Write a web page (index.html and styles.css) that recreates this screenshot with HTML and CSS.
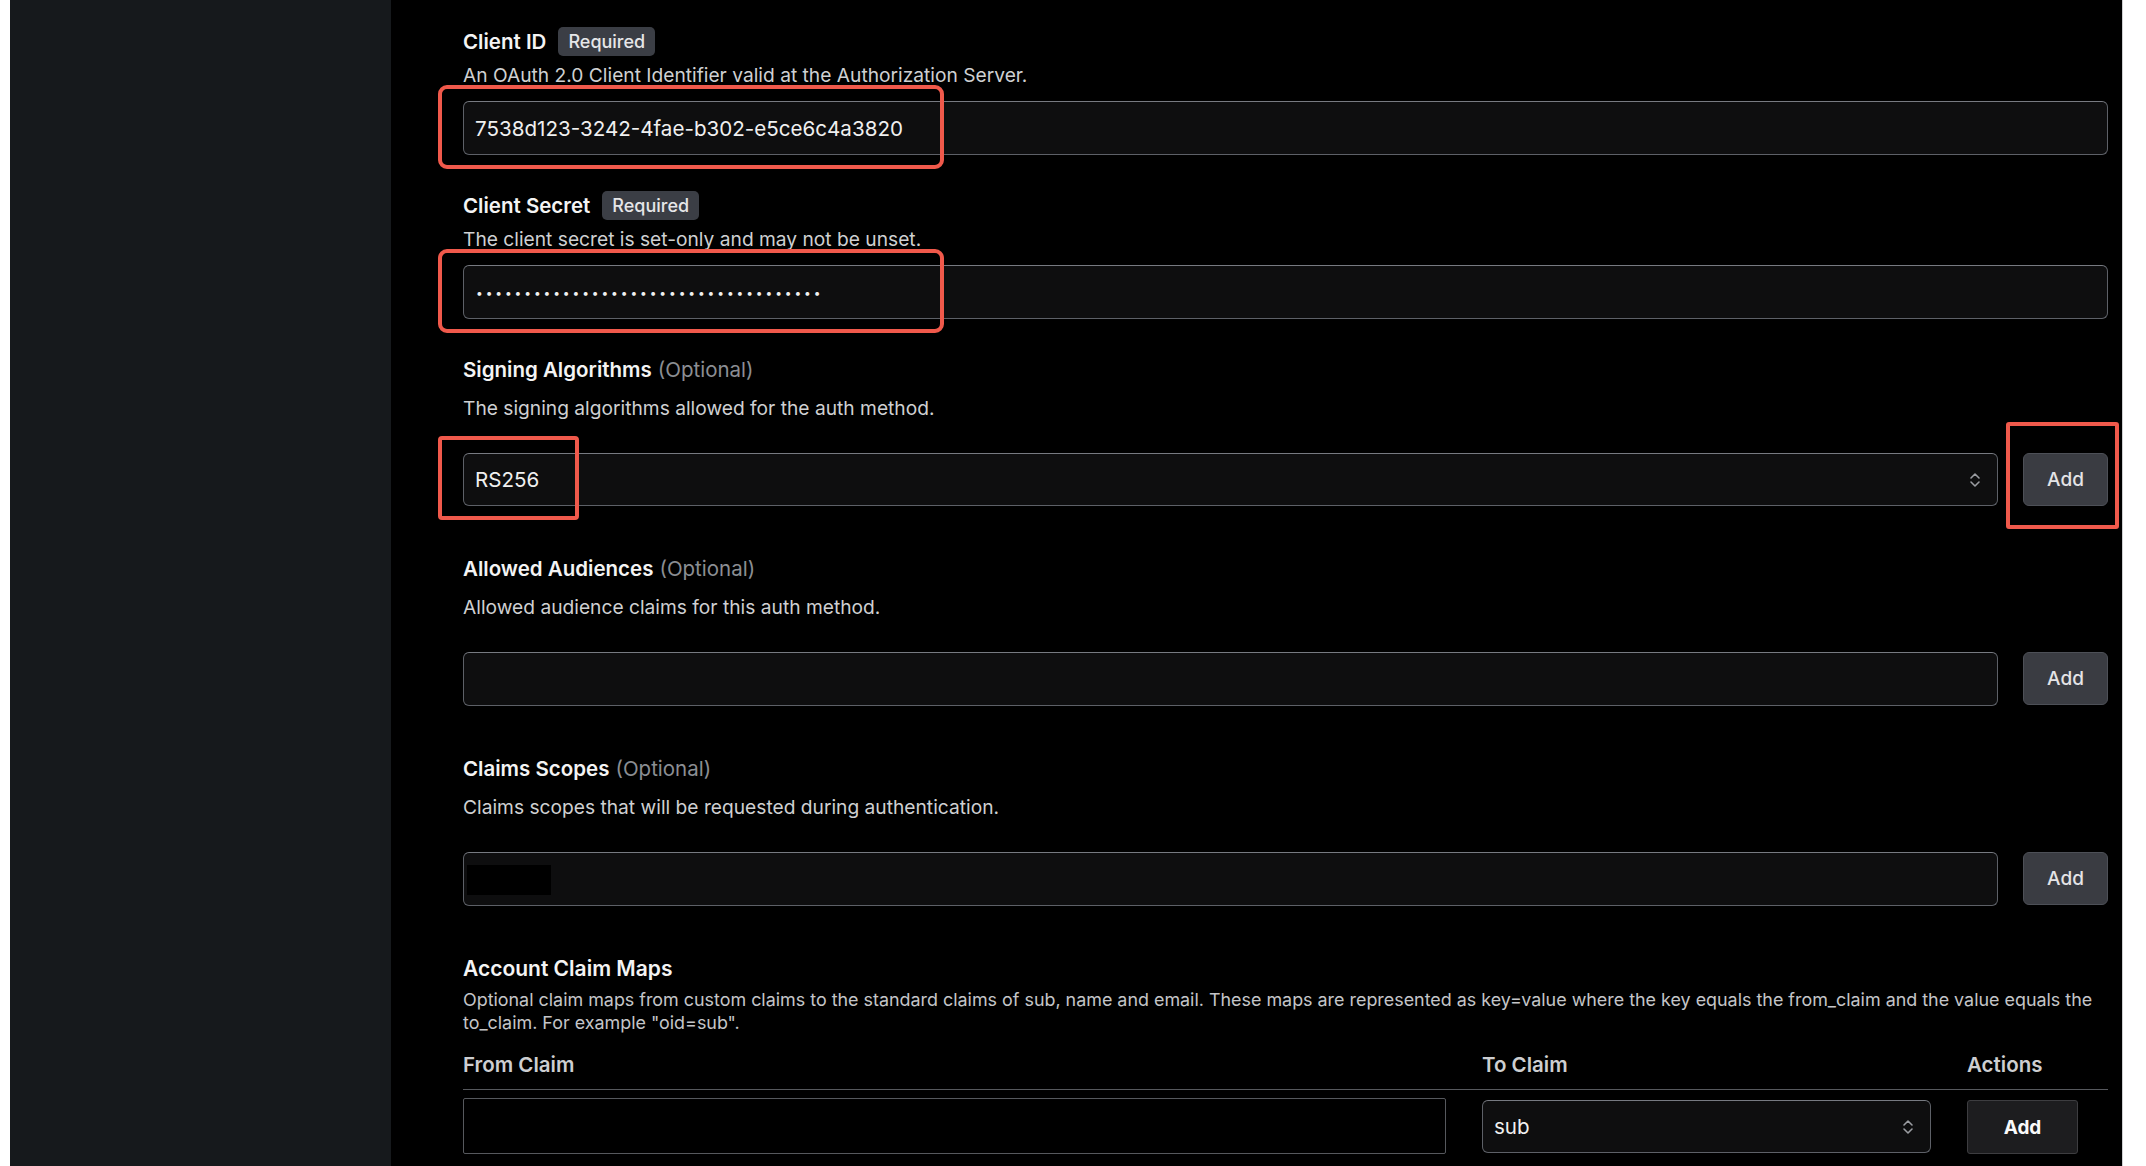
FILE: index.html
```html
<!DOCTYPE html>
<html lang="en">
<head>
  <meta charset="UTF-8">
  <title>Edit Auth Method</title>
  <meta name="viewport" content="width=device-width, initial-scale=1.0">
  <link rel="stylesheet" href="styles.css">
</head>
<body>
  <div class="app">
    <aside class="sidebar"></aside>

    <main class="content">
      <div class="field field-required">
        <div class="field-label">Client ID <span class="badge">Required</span></div>
        <p class="field-help">An OAuth 2.0 Client Identifier valid at the Authorization Server.</p>
        <div class="control">
          <input class="text-input" type="text" value="7538d123-3242-4fae-b302-e5ce6c4a3820">
          <span class="callout callout-value"></span>
        </div>
      </div>

      <div class="field field-required">
        <div class="field-label">Client Secret <span class="badge">Required</span></div>
        <p class="field-help">The client secret is set-only and may not be unset.</p>
        <div class="control">
          <input class="text-input secret" type="text" value="••••••••••••••••••••••••••••••••••••">
          <span class="callout callout-value"></span>
        </div>
      </div>

      <div class="field">
        <div class="field-label">Signing Algorithms <span class="optional">(Optional)</span></div>
        <p class="field-help">The signing algorithms allowed for the auth method.</p>
        <div class="control list-row">
          <div class="select">
            <select>
              <option>RS256</option>
            </select>
            <svg class="select-icon" width="14" height="20" viewBox="0 0 14 20"><path d="M3 8 L7 4 L11 8 M3 12 L7 16 L11 12" fill="none" stroke="#9a9ca1" stroke-width="1.6" stroke-linecap="round" stroke-linejoin="round"/></svg>
            <span class="callout callout-algo"></span>
          </div>
          <span class="add-wrap">
            <button class="btn">Add</button>
            <span class="callout callout-add"></span>
          </span>
        </div>
      </div>

      <div class="field">
        <div class="field-label">Allowed Audiences <span class="optional">(Optional)</span></div>
        <p class="field-help">Allowed audience claims for this auth method.</p>
        <div class="control list-row">
          <input class="text-input" type="text" value="">
          <button class="btn">Add</button>
        </div>
      </div>

      <div class="field">
        <div class="field-label">Claims Scopes <span class="optional">(Optional)</span></div>
        <p class="field-help">Claims scopes that will be requested during authentication.</p>
        <div class="control list-row">
          <div class="text-input tag-input"><span class="redacted"></span></div>
          <button class="btn">Add</button>
        </div>
      </div>

      <div class="claim-maps">
        <div class="field-label">Account Claim Maps</div>
        <p class="claim-help">Optional claim maps from custom claims to the standard claims of sub, name and email. These maps are represented as key=value where the key equals the from_claim and the value equals the to_claim. For example "oid=sub".</p>

        <div class="map-table">
          <div class="map-head">
            <span>From Claim</span>
            <span>To Claim</span>
            <span>Actions</span>
          </div>
          <div class="map-row">
            <input class="plain-input" type="text" value="">
            <div class="select">
              <select>
                <option>sub</option>
                <option>name</option>
                <option>email</option>
              </select>
              <svg class="select-icon" width="14" height="20" viewBox="0 0 14 20"><path d="M3 8 L7 4 L11 8 M3 12 L7 16 L11 12" fill="none" stroke="#9a9ca1" stroke-width="1.6" stroke-linecap="round" stroke-linejoin="round"/></svg>
            </div>
            <div><button class="btn btn-dark">Add</button></div>
          </div>
        </div>
      </div>
    </main>
  </div>
</body>
</html>
```

FILE: styles.css
```css
body {
  margin: 0;
  background: #fff;
  font-family: Inter, 'Noto Sans', sans-serif;
  overflow: hidden;
}
.app {
  display: flex;
  height: 1166px;
  padding-left: 10px;
}
.sidebar {
  width: 381px;
  flex-shrink: 0;
  background: #16191c;
}
.content {
  width: 1645px;
  padding: 26px 14px 0 72px;
  background: #000;
  color: #f2f2f2;
  border-right: 1px solid #cfd0d2;
}

/* form fields */
.field {
  margin-bottom: 47px;
}
.field-required {
  margin-bottom: 35px;
}
.field-label {
  display: flex;
  align-items: center;
  gap: 12px;
  height: 30px;
  font-size: 20.5px;
  font-weight: 600;
  color: #f4f4f4;
}
.field-label .optional {
  margin-left: -6px;
  font-weight: 400;
  color: #8b8e93;
}
.badge {
  height: 29px;
  line-height: 29px;
  padding: 0 10px;
  border-radius: 5px;
  background: #3b3e45;
  font-size: 18px;
  font-weight: 500;
  color: #e6e6e8;
}
.field-help {
  margin: 13px 0 34px;
  font-size: 19.2px;
  line-height: 22px;
  color: #cfd0d2;
}
.field-required .field-help {
  margin: 8px 0 15px;
}
.control {
  position: relative;
}
.list-row {
  display: flex;
  gap: 25px;
}
.list-row > .text-input,
.list-row > .select {
  flex: 1;
}

.text-input,
.select select {
  box-sizing: border-box;
  width: 100%;
  height: 54px;
  padding: 0 11px;
  background: #0e0e0f;
  border: 1px solid #5d6067;
  border-top-color: #777a81;
  border-radius: 6px;
  font-family: inherit;
  font-size: 20.6px;
  color: #f0f0f0;
  outline: none;
}
.text-input.secret {
  padding-left: 12px;
  font-size: 12px;
  letter-spacing: 2.9px;
}
.tag-input {
  display: flex;
  align-items: center;
  padding: 2px 3px 0;
}
.redacted {
  width: 84px;
  height: 30px;
  background: #000;
}
.select {
  position: relative;
}
.select select {
  appearance: none;
  -webkit-appearance: none;
  height: 53px;
}
.select-icon {
  position: absolute;
  right: 16px;
  top: 50%;
  transform: translateY(-50%);
}

.btn {
  width: 85px;
  height: 53px;
  background: #3a3c42;
  border: 1px solid #4d5057;
  border-radius: 6px;
  font-family: inherit;
  font-size: 19px;
  font-weight: 500;
  color: #e4e4e6;
  cursor: pointer;
}
.btn-dark {
  width: 111px;
  height: 54px;
  background: #1d1d1f;
  border: 1px solid #3d3d40;
  border-radius: 3px;
  font-weight: 700;
  color: #fafafa;
}
.add-wrap {
  position: relative;
  display: block;
}

/* red outlines drawn over the important controls */
.callout {
  position: absolute;
  border: 4px solid #f0594b;
  pointer-events: none;
}
.callout-value {
  left: -25px;
  top: -16px;
  width: 498px;
  height: 76px;
  border-radius: 9px;
}
.callout-algo {
  left: -25px;
  top: -17px;
  width: 133px;
  height: 76px;
  border-radius: 4px;
}
.callout-add {
  left: -17px;
  top: -31px;
  width: 105px;
  height: 99px;
  border-radius: 3px;
}

/* claim maps table */
.claim-maps .field-label {
  font-size: 21px;
}
.claim-help {
  margin: 5px 0 19px;
  font-size: 17.9px;
  line-height: 23px;
  color: #c4c5c8;
}
.map-head,
.map-row {
  display: grid;
  grid-template-columns: 1fr 449px 141px;
  column-gap: 36px;
}
.map-head {
  padding-bottom: 12px;
  border-bottom: 1px solid #56585d;
  font-size: 20.5px;
  font-weight: 600;
  line-height: 24px;
  color: #cdced1;
}
.map-row {
  margin-top: 10px;
}
.plain-input {
  box-sizing: border-box;
  height: 56px;
  margin-top: -2px;
  background: #000;
  border: 1px solid #56585d;
  border-radius: 2px;
  outline: none;
}
.map-row .select select {
  padding-left: 11px;
}
```
